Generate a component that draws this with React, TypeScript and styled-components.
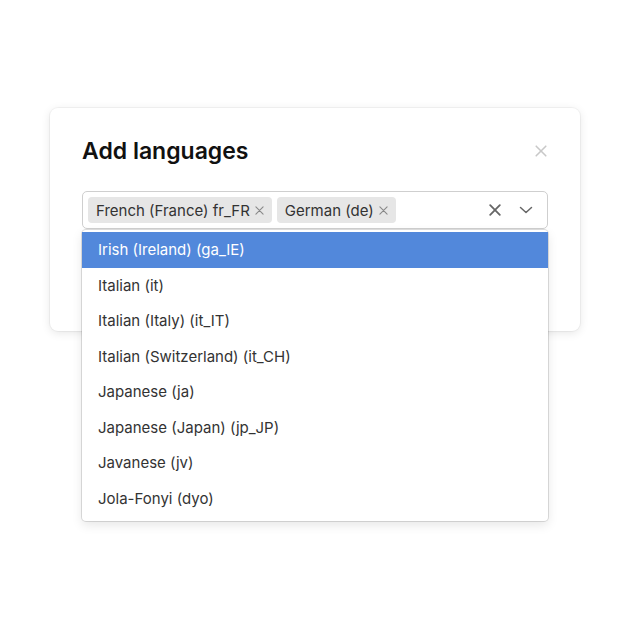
import React from "react";
import styled, { createGlobalStyle } from "styled-components";

const LANGUAGES = [
  "Irish (Ireland) (ga_IE)",
  "Italian (it)",
  "Italian (Italy) (it_IT)",
  "Italian (Switzerland) (it_CH)",
  "Japanese (ja)",
  "Japanese (Japan) (jp_JP)",
  "Javanese (jv)",
  "Jola-Fonyi (dyo)",
];

const SELECTED = ["French (France) fr_FR", "German (de)"];

const Cross = ({ size = 10, stroke = 1.4 }: { size?: number; stroke?: number }) => (
  <svg width={size} height={size} viewBox="0 0 10 10" fill="none">
    <path d="M1 1L9 9M9 1L1 9" stroke="currentColor" strokeWidth={stroke} strokeLinecap="round" />
  </svg>
);

const App = () => {
  return (
    <>
      <GlobalStyle />
      <Page>
        <Modal>
          <Header>
            <Title>Add languages</Title>
            <CloseButton>
              <Cross size={12} stroke={1.3} />
            </CloseButton>
          </Header>
          <SelectWrap>
            <Control>
              <Values>
                {SELECTED.map((item) => (
                  <Chip key={item}>
                    {item}
                    <ChipRemove>
                      <Cross size={9} stroke={1.2} />
                    </ChipRemove>
                  </Chip>
                ))}
              </Values>
              <Indicators>
                <Indicator>
                  <Cross size={12} stroke={1.5} />
                </Indicator>
                <Indicator>
                  <svg width="14" height="8" viewBox="0 0 14 8" fill="none">
                    <path d="M1.5 1.5L7 6.5L12.5 1.5" stroke="currentColor" strokeWidth="1.5" strokeLinecap="round" strokeLinejoin="round" />
                  </svg>
                </Indicator>
              </Indicators>
            </Control>
            <Menu>
              {LANGUAGES.map((lang, i) => (
                <Option key={lang} active={i === 0}>
                  {lang}
                </Option>
              ))}
            </Menu>
          </SelectWrap>
        </Modal>
      </Page>
    </>
  );
};

const GlobalStyle = createGlobalStyle`
  * { box-sizing: border-box; }
  body {
    margin: 0;
    background: #fff;
    font-family: Inter, "Noto Sans", sans-serif;
    color: #333;
  }
`;

const Page = styled.main`
  width: 630px;
  height: 630px;
  padding: 108px 50px 0;
`;

const Modal = styled.section`
  width: 530px;
  height: 223px;
  padding: 29px 32px 0;
  background: #fff;
  border-radius: 8px;
  box-shadow: 0 0 0 1px rgba(0, 0, 0, 0.04), 0 2px 10px rgba(0, 0, 0, 0.1);
`;

const Header = styled.div`
  display: flex;
  justify-content: space-between;
  align-items: center;
  height: 28px;
  margin-bottom: 26px;
`;

const Title = styled.h2`
  margin: 0;
  font-size: 23px;
  font-weight: 600;
  color: #111;
`;

const CloseButton = styled.span`
  display: flex;
  color: #c8c8c8;
  margin-right: 1px;
`;

const SelectWrap = styled.div`
  position: relative;
`;

const Control = styled.div`
  display: flex;
  align-items: center;
  height: 38px;
  padding: 0 14px 0 4px;
  border: 1px solid #cfcfcf;
  border-radius: 5px;
  background: #fff;
`;

const Values = styled.div`
  flex: 1;
  display: flex;
  gap: 5px;
  padding-left: 1px;
`;

const Chip = styled.span`
  display: flex;
  align-items: center;
  gap: 5px;
  height: 26px;
  padding: 0 8px;
  border-radius: 4px;
  background: #e6e6e6;
  font-size: 15px;
  color: #333;
`;

const ChipRemove = styled.span`
  display: flex;
  color: #888;
`;

const Indicators = styled.div`
  display: flex;
  align-items: center;
  gap: 18px;
`;

const Indicator = styled.span`
  display: flex;
  color: #666;
`;

const Menu = styled.ul`
  position: absolute;
  top: 100%;
  left: 0;
  right: 0;
  margin: 1px 0 0;
  padding: 2px 0 5px;
  list-style: none;
  background: #fff;
  border-radius: 4px;
  box-shadow: 0 0 0 1px rgba(0, 0, 0, 0.12), 0 4px 11px rgba(0, 0, 0, 0.1);
`;

const Option = styled.li<{ active?: boolean }>`
  height: 35.5px;
  display: flex;
  align-items: center;
  padding: 0 16px;
  font-size: 15px;
  color: ${({ active }) => (active ? "#fff" : "#333")};
  background: ${({ active }) => (active ? "#5288db" : "transparent")};
`;

export default App;
